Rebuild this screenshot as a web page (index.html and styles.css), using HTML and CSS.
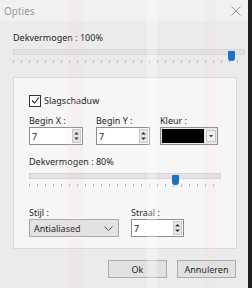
FILE: index.html
```html
<!DOCTYPE html>
<html lang="nl">
<head>
  <meta charset="UTF-8">
  <title>Opties</title>
  <link rel="stylesheet" href="styles.css">
</head>
<body>
  <div id="window">
    <div id="titlebar">
      <span class="title">Opties</span>
      <svg class="close" width="10" height="10" viewBox="0 0 10 10"><path d="M0.5 0.5L9.5 9.5M9.5 0.5L0.5 9.5" stroke="#9a9a9a" stroke-width="1"/></svg>
    </div>

    <div id="content">
      <div class="label">Dekvermogen : 100%</div>
      <div class="slider wide">
        <div class="track"></div>
        <div class="thumb" style="left: 215px;"></div>
        <div class="ticks"></div>
      </div>

      <div id="panel">
        <label class="check">
          <span class="box">
            <svg width="9" height="9" viewBox="0 0 9 9"><path d="M1 4.5L3.5 7L8 1.5" fill="none" stroke="#222" stroke-width="1.1"/></svg>
          </span>
          Slagschaduw
        </label>

        <div class="row">
          <div class="field w54">
            <div class="label">Begin X :</div>
            <div class="spin"><span>7</span>
              <svg class="spin-btn" width="9" height="14" viewBox="0 0 9 14"><path d="M2 5.5L4.5 3L7 5.5Z M2 8.5L4.5 11L7 8.5Z" fill="#333"/></svg>
            </div>
          </div>
          <div class="field w54">
            <div class="label">Begin Y :</div>
            <div class="spin"><span>7</span>
              <svg class="spin-btn" width="9" height="14" viewBox="0 0 9 14"><path d="M2 5.5L4.5 3L7 5.5Z M2 8.5L4.5 11L7 8.5Z" fill="#333"/></svg>
            </div>
          </div>
          <div class="field w58">
            <div class="label">Kleur :</div>
            <div class="color"><div class="swatch"></div>
              <svg class="drop-btn" width="10" height="12" viewBox="0 0 10 12"><path d="M3 5L5 7.5L7 5Z" fill="#333"/></svg>
            </div>
          </div>
        </div>

        <div class="label mid">Dekvermogen : 80%</div>
        <div class="slider narrow">
          <div class="track"></div>
          <div class="thumb" style="left: 143px;"></div>
          <div class="ticks"></div>
        </div>

        <div class="row lower">
          <div class="field w90">
            <div class="label">Stijl :</div>
            <div class="select"><span>Antialiased</span><svg width="9" height="5" viewBox="0 0 9 5"><path d="M0.5 0.5L4.5 4.5L8.5 0.5" fill="none" stroke="#555"/></svg></div>
          </div>
          <div class="field w53">
            <div class="label">Straal :</div>
            <div class="spin"><span>7</span>
              <svg class="spin-btn" width="9" height="14" viewBox="0 0 9 14"><path d="M2 5.5L4.5 3L7 5.5Z M2 8.5L4.5 11L7 8.5Z" fill="#333"/></svg>
            </div>
          </div>
        </div>
      </div>

      <div id="buttons">
        <button>Ok</button>
        <button>Annuleren</button>
      </div>
    </div>
  </div>
  <div id="fade"></div>
</body>
</html>
```

FILE: styles.css
```css
body {
    margin: 0;
    padding: 0;
    width: 252px;
    height: 288px;
    overflow: hidden;
    background-color: #1e1e1e;
    font-family: "Noto Sans", Arial, sans-serif;
    font-size: 9px;
    color: #1e1e1e;
}

#window {
    width: 248px;
    height: 288px;
    background-color: #ebebeb;
    display: flex;
    flex-direction: column;
}

#titlebar {
    height: 21px;
    padding: 0 7px 0 4px;
    display: flex;
    align-items: center;
    justify-content: space-between;
    background-color: #f1f1f1;
    color: #9a9a9a;
    font-size: 10px;
}

#content {
    padding: 10px 0 0 13px;
}

.label {
    line-height: 14px;
    white-space: nowrap;
}

.slider {
    position: relative;
    height: 18px;
}

.slider.wide {
    width: 232px;
}

.slider.narrow {
    width: 192px;
    margin-top: 2px;
}

.track {
    height: 4px;
    margin-top: 4px;
    background-color: #e2e2e2;
    border: 1px solid #d6d6d6;
}

.thumb {
    position: absolute;
    top: 2px;
    width: 7px;
    height: 10px;
    background-color: #1a73c9;
    border-radius: 1px 1px 3px 3px;
}

.ticks {
    height: 3px;
    margin-top: 5px;
    background: repeating-linear-gradient(to right, #bdbdbd 0, #bdbdbd 1px, transparent 1px, transparent 8px);
}

#panel {
    margin-top: 10px;
    width: 207px;
    height: 154px;
    padding: 16px 0 0 15px;
    background-color: #f6f6f6;
    border: 1px solid #dadada;
}

.check {
    display: flex;
    align-items: center;
    gap: 3px;
    line-height: 13px;
}

.box {
    width: 10px;
    height: 10px;
    border: 1px solid #333;
    background-color: #fff;
    display: flex;
    align-items: center;
    justify-content: center;
}

.row {
    display: flex;
    margin-top: 8px;
    gap: 13px;
}

.row .field:nth-child(3) {
    margin-left: -3px;
}

.row.lower {
    margin-top: 16px;
    gap: 12px;
}

.field .label {
    line-height: 12px;
}

.label.mid {
    margin-top: 10px;
}

.w54 { width: 54px; }
.w58 { width: 58px; }
.w90 { width: 90px; }
.w53 { width: 53px; }

.spin {
    height: 16px;
    border: 1px solid #8e8e8e;
    background-color: #fff;
    display: flex;
    align-items: center;
    justify-content: space-between;
    padding-left: 2px;
}

.spin-btn {
    margin-right: 1px;
    background-color: #e6e6e6;
    outline: 1px solid #c8c8c8;
    outline-offset: -1px;
}

.color {
    height: 16px;
    border: 1px solid #8e8e8e;
    background-color: #e9e9e9;
    display: flex;
    align-items: center;
    padding: 0 1px;
    gap: 2px;
}

.swatch {
    flex-grow: 1;
    height: 14px;
    background-color: #000;
}

.drop-btn {
    background-color: #f0f0f0;
    outline: 1px solid #c8c8c8;
    outline-offset: -1px;
}

.select {
    height: 16px;
    border: 1px solid #a8a8a8;
    background-color: #e2e2e2;
    display: flex;
    align-items: center;
    justify-content: space-between;
    padding: 0 5px 0 4px;
}

#buttons {
    display: flex;
    justify-content: flex-end;
    gap: 10px;
    margin-top: 11px;
    width: 223px;
}

#buttons button {
    font-family: "Noto Sans", Arial, sans-serif;
    font-size: 9px;
    color: #1e1e1e;
    width: 59px;
    height: 18px;
    padding: 0;
    background-color: #e1e1e1;
    border: 1px solid #adadad;
}

#fade {
    position: absolute;
    top: 0;
    left: 0;
    width: 248px;
    height: 288px;
    pointer-events: none;
    background:
        linear-gradient(to right, transparent 66px, rgba(255, 200, 200, 0.12) 68px, rgba(255, 200, 200, 0.12) 82px, transparent 84px, transparent 146px, rgba(255, 255, 255, 0.3) 148px, rgba(255, 255, 255, 0.3) 156px, transparent 158px, transparent 204px, rgba(255, 200, 200, 0.1) 206px, rgba(255, 200, 200, 0.1) 214px, transparent 216px);
}
```
